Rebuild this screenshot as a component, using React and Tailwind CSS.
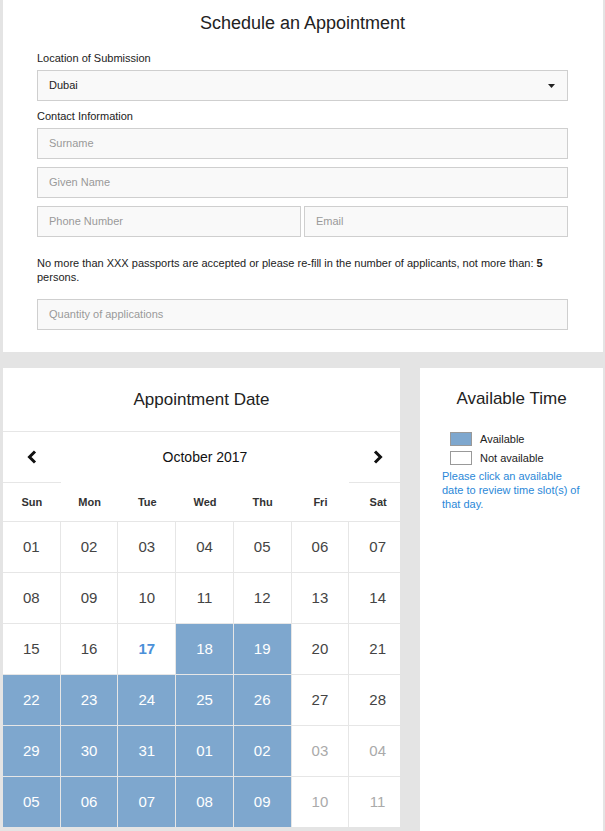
const weekdays = ["Sun", "Mon", "Tue", "Wed", "Thu", "Fri", "Sat"];

// state: n = normal, t = today, a = available, o = other month
const days = [
  ["01", "n"], ["02", "n"], ["03", "n"], ["04", "n"], ["05", "n"], ["06", "n"], ["07", "n"],
  ["08", "n"], ["09", "n"], ["10", "n"], ["11", "n"], ["12", "n"], ["13", "n"], ["14", "n"],
  ["15", "n"], ["16", "n"], ["17", "t"], ["18", "a"], ["19", "a"], ["20", "n"], ["21", "n"],
  ["22", "a"], ["23", "a"], ["24", "a"], ["25", "a"], ["26", "a"], ["27", "n"], ["28", "n"],
  ["29", "a"], ["30", "a"], ["31", "a"], ["01", "a"], ["02", "a"], ["03", "o"], ["04", "o"],
  ["05", "a"], ["06", "a"], ["07", "a"], ["08", "a"], ["09", "a"], ["10", "o"], ["11", "o"],
];

const dayStyles = {
  n: "bg-white text-[#444]",
  t: "bg-white text-[#4a90d9] font-bold",
  a: "bg-[#7ea7ce] text-white",
  o: "bg-white text-[#aaa]",
};

function Field({ placeholder, className = "" }) {
  return (
    <div
      className={`h-[31px] flex items-center pl-[11px] bg-[#f9f9f9] border border-[#cfcfcf] text-[11px] text-[#999] ${className}`}
    >
      {placeholder}
    </div>
  );
}

function Chevron({ dir }) {
  return (
    <svg width="10" height="14" viewBox="0 0 10 14" fill="none">
      <path
        d={dir === "left" ? "M8 1.5L2.5 7L8 12.5" : "M2 1.5L7.5 7L2 12.5"}
        stroke="#111"
        strokeWidth="3"
      />
    </svg>
  );
}

export default function App() {
  return (
    <div
      className="min-h-[831px] bg-[#e4e4e4] pl-[3px] pr-[2px] text-[#222]"
      style={{ fontFamily: '"Liberation Sans", Arial, sans-serif' }}
    >
      {/* Schedule form */}
      <div className="bg-white h-[352px] pt-[12px] pl-[34px] pr-[35px]">
        <h1 className="text-[18px] leading-[22px] text-center text-[#222]">Schedule an Appointment</h1>

        <div className="mt-[17px] text-[11px] leading-[14px]">Location of Submission</div>
        <div className="mt-[5px] h-[31px] flex items-center justify-between pl-[11px] pr-[12px] bg-[#f9f9f9] border border-[#cfcfcf] text-[11px] text-[#222]">
          <span>Dubai</span>
          <svg width="7" height="4" viewBox="0 0 7 4">
            <path d="M0 0H7L3.5 4Z" fill="#222" />
          </svg>
        </div>

        <div className="mt-[8px] text-[11px] leading-[14px]">Contact Information</div>
        <Field placeholder="Surname" className="mt-[5px]" />
        <Field placeholder="Given Name" className="mt-[8px]" />
        <div className="mt-[8px] flex gap-[3px]">
          <Field placeholder="Phone Number" className="flex-1" />
          <Field placeholder="Email" className="flex-1" />
        </div>

        <p className="mt-[19px] text-[11px] leading-[14px] text-[#222]">
          No more than XXX passports are accepted or please re-fill in the number of applicants, not more than: <b>5</b> persons.
        </p>
        <Field placeholder="Quantity of applications" className="mt-[15px]" />
      </div>

      <div className="mt-[16px] flex gap-[20px]">
        {/* Calendar */}
        <div className="w-[397px] bg-white overflow-hidden h-[459px]">
          <div className="h-[64px] flex items-center justify-center border-b border-[#e6e6e6] text-[17px] text-[#222]">
            Appointment Date
          </div>
          <div className="w-[404px]">
            <div className="grid grid-cols-7 h-[51px]">
              <div className="flex items-center justify-center border-b border-[#e6e6e6]">
                <Chevron dir="left" />
              </div>
              <div className="col-span-5 flex items-center justify-center text-[14px] text-[#111]">October 2017</div>
              <div className="flex items-center justify-center border-b border-[#e6e6e6]">
                <Chevron dir="right" />
              </div>
            </div>
            <div className="grid grid-cols-7 h-[39px] border-b border-[#e6e6e6]">
              {weekdays.map((d) => (
                <div key={d} className="flex items-center justify-center text-[11px] font-bold text-[#333]">
                  {d}
                </div>
              ))}
            </div>
            <div className="grid grid-cols-7">
              {days.map(([n, s], i) => (
                <div
                  key={i}
                  className={`h-[51px] flex items-center justify-center border-r border-b border-[#e6e6e6] text-[15px] ${dayStyles[s]}`}
                >
                  {n}
                </div>
              ))}
            </div>
          </div>
        </div>

        {/* Available time */}
        <div className="flex-1 bg-white min-h-[463px]">
          <div className="h-[61px] flex items-center justify-center text-[17px] text-[#222]">Available Time</div>
          <div className="pl-[30px] text-[11px] leading-[14px] text-[#222]">
            <div className="flex items-center gap-[8px] mt-[3px]">
              <span className="w-[22px] h-[14px] bg-[#7ea7ce] border border-[#999]" />
              <span>Available</span>
            </div>
            <div className="flex items-center gap-[8px] mt-[5px]">
              <span className="w-[22px] h-[14px] bg-white border border-[#999]" />
              <span>Not available</span>
            </div>
          </div>
          <p className="mt-[4px] ml-[22px] w-[142px] text-[11px] leading-[14px] text-[#2b88d8]">
            Please click an available date to review time slot(s) of that day.
          </p>
        </div>
      </div>
    </div>
  );
}
